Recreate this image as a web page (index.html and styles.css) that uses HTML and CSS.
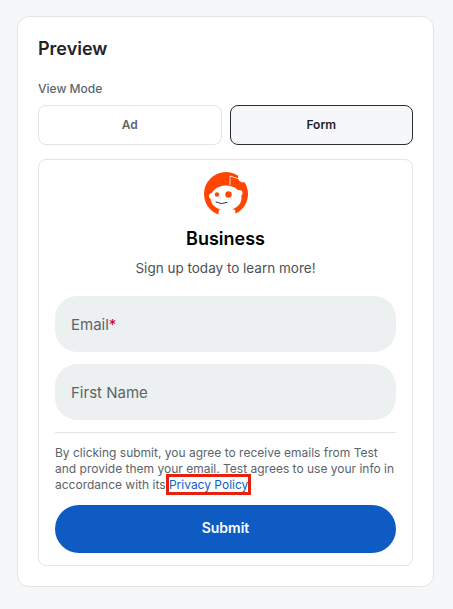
FILE: index.html
```html
<!DOCTYPE html>
<html lang="en">
<head>
  <meta charset="UTF-8" />
  <title>Preview</title>
  <link rel="stylesheet" href="styles.css">
</head>
<body>

  <div class="card">
    <h2 class="card-title">Preview</h2>
    <div class="field-label">View Mode</div>

    <div class="mode-row">
      <button class="mode-btn">Ad</button>
      <button class="mode-btn active">Form</button>
    </div>

    <div class="form-preview">
      <svg class="logo" viewBox="0 0 44 44" width="44" height="44">
        <circle cx="22" cy="22" r="22" fill="#ff4500"/>
        <circle cx="39" cy="5.5" r="5" fill="#fff"/>
        <path d="M26 13 L26 4 L35 7" fill="none" stroke="#ffd5c5" stroke-width="1"/>
        <path d="M15 38 Q23 34 31 38 L32 44 L14 44 Z" fill="#fff"/>
        <circle cx="8" cy="24" r="3" fill="#fff"/>
        <circle cx="35.5" cy="21" r="3" fill="#fff"/>
        <ellipse cx="22" cy="26" rx="15.5" ry="12.5" fill="#fff"/>
        <circle cx="24.5" cy="22.5" r="3.2" fill="#ff4500"/>
        <circle cx="13" cy="22.5" r="2.2" fill="#ff4500"/>
        <path d="M12 30 Q17 33 23 30.5" fill="none" stroke="#333" stroke-width="1" stroke-linecap="round"/>
      </svg>
      <h3 class="brand">Business</h3>
      <p class="tagline">Sign up today to learn more!</p>

      <div class="input-box">Email<span class="req">*</span></div>
      <div class="input-box">First Name</div>

      <hr class="divider">

      <p class="legal">By clicking submit, you agree to receive emails from Test and provide them your email. Test agrees to use your info in accordance with its <a href="#" class="policy">Privacy Policy</a>.</p>

      <button class="submit">Submit</button>
    </div>
  </div>

</body>
</html>
```

FILE: styles.css
```css
* { box-sizing: border-box; margin: 0; padding: 0; font-family: Inter, "Liberation Sans", sans-serif; }
body { background-color: #f6f7f9; padding: 16px 19px 0 17px; }
.card {
  height: 571px;
  padding: 20px;
  background: white;
  border: 1px solid #e2e4e7;
  border-radius: 12px;
}
.card-title {
  font-size: 18px;
  line-height: 24px;
  font-weight: 600;
  color: #1f2428;
}
.field-label {
  margin-top: 20px;
  font-size: 12px;
  line-height: 16px;
  font-weight: 500;
  color: #5c6670;
}
.mode-row {
  display: grid;
  grid-template-columns: 1fr 1fr;
  gap: 8px;
  margin-top: 8px;
}
.mode-btn {
  height: 40px;
  padding-bottom: 2px;
  background: white;
  border: 1px solid #e2e4e7;
  border-radius: 8px;
  font-size: 12px;
  font-weight: 600;
  color: #5c6670;
}
.mode-btn.active {
  background: #f6f7f9;
  border-color: #2a2e33;
  color: #1f2428;
}
.form-preview {
  height: 407px;
  margin-top: 14px;
  padding: 12px 16px 0;
  border: 1px solid #e2e4e7;
  border-radius: 8px;
  text-align: center;
}
.logo { display: block; margin: 0 auto; }
.brand {
  margin-top: 11px;
  font-size: 18px;
  line-height: 24px;
  font-weight: 600;
  color: #000;
}
.tagline {
  margin-top: 7px;
  font-size: 13.5px;
  line-height: 20px;
  color: #4a5157;
}
.input-box {
  height: 56px;
  margin-top: 12px;
  padding-left: 16px;
  background: #edf0f1;
  border-radius: 22px;
  font-size: 15px;
  line-height: 57px;
  color: #5a6469;
  text-align: left;
}
.tagline + .input-box { margin-top: 18px; }
.req { color: #c00030; }
.divider {
  margin-top: 12px;
  border: 0;
  border-top: 1px solid #e2e4e7;
}
.legal {
  margin-top: 12px;
  font-size: 12px;
  line-height: 16px;
  color: #5a6469;
  text-align: left;
}
.policy {
  color: #0f5fc6;
  text-decoration: none;
  outline: 3px solid #e8200e;
  outline-offset: 0;
}
.submit {
  display: block;
  width: 100%;
  height: 48px;
  margin-top: 12px;
  padding-bottom: 3px;
  background: #0e5bc4;
  border: 0;
  border-radius: 24px;
  font-size: 14px;
  font-weight: 600;
  color: white;
}
```
